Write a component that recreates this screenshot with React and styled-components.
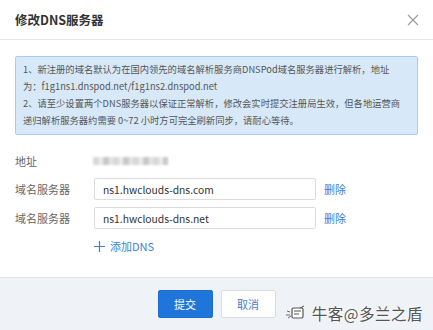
import React, { useState } from 'react';
import styled, { createGlobalStyle } from 'styled-components';

const GlobalStyle = createGlobalStyle`
  html, body {
    margin: 0;
    padding: 0;
    background: #fff;
  }
  body {
    font-family: "Noto Sans CJK SC", "Noto Sans", sans-serif;
    color: #333;
  }
`;

const Dialog = styled.div`
  position: relative;
  width: 433px;
  height: 330px;
  background: #fff;
  display: flex;
  flex-direction: column;
  overflow: hidden;
`;

const Header = styled.div`
  height: 39px;
  border-bottom: 1px solid #e6e6e6;
  display: flex;
  align-items: center;
  justify-content: space-between;
  padding: 0 14px 0 15px;
`;

const Title = styled.h2`
  margin: 0;
  font-size: 12.5px;
  font-weight: 700;
  color: #333;
`;

const CloseButton = styled.button`
  border: none;
  background: none;
  padding: 0;
  width: 12px;
  height: 12px;
  display: flex;
  cursor: pointer;
`;

const Body = styled.div`
  height: 237px;
  box-sizing: border-box;
  padding: 16px 15px 0;
`;

const Notice = styled.div`
  background: #d7e9f8;
  border: 1px solid #a9cbee;
  border-radius: 2px;
  padding: 4px 7px 5px;
  font-size: 9.3px;
  line-height: 17px;
  color: #555;
  white-space: nowrap;
`;

const Form = styled.div`
  margin-top: 16px;
  display: flex;
  flex-direction: column;
  gap: 7px;
`;

const Row = styled.div`
  display: flex;
  align-items: center;
  height: ${(p) => p.h || 22}px;
`;

const Label = styled.span`
  width: 79px;
  flex: none;
  font-size: 11px;
  color: #666;
`;

const Blurred = styled.div`
  width: 75px;
  height: 8px;
  margin-left: -1px;
  background: repeating-linear-gradient(90deg, #d8d8d8 0 6px, #ececec 6px 10px, #c9c9c9 10px 16px, #e4e4e4 16px 20px);
  filter: blur(1px);
`;

const Input = styled.input`
  width: 222px;
  height: 22px;
  box-sizing: border-box;
  border: 1px solid #dcdcdc;
  border-radius: 2px;
  padding: 0 8px;
  font-family: inherit;
  font-size: 10.3px;
  color: #333;
  outline: none;
  margin-right: 8px;
`;

const LinkButton = styled.button`
  border: none;
  background: none;
  padding: 0;
  font-family: inherit;
  font-size: 11px;
  color: #3c7fd6;
  cursor: pointer;
  display: flex;
  align-items: center;
  gap: 5px;
`;

const AddRow = styled(Row)`
  padding-left: 79px;
  margin-top: 1px;
`;

const Footer = styled.div`
  flex: 1;
  border-top: 1px solid #e3e3e3;
  background: #eff3f7;
  display: flex;
  justify-content: center;
  align-items: flex-start;
  padding-top: 12px;
  gap: 8px;
`;

const Button = styled.button`
  width: 55px;
  height: 28px;
  border-radius: 2px;
  font-family: inherit;
  font-size: 11px;
  cursor: pointer;
  border: 1px solid ${(p) => (p.primary ? '#1b6fd2' : '#dcdcdc')};
  background: ${(p) => (p.primary ? '#1f75d9' : '#fff')};
  color: ${(p) => (p.primary ? '#fff' : '#3c7fd6')};
`;

const Watermark = styled.div`
  position: absolute;
  right: 10px;
  bottom: 6px;
  display: flex;
  align-items: center;
  gap: 4px;
  font-size: 15.5px;
  color: #555;
  text-shadow: 0 0 2px #fff, 0 0 2px #fff;
  letter-spacing: 0.5px;
`;

const initial = ['ns1.hwclouds-dns.com', 'ns1.hwclouds-dns.net'];

export default function App() {
  const [servers, setServers] = useState(initial);

  const update = (i, v) => setServers((s) => s.map((x, j) => (j === i ? v : x)));
  const remove = (i) => setServers((s) => s.filter((_, j) => j !== i));

  return (
    <Dialog>
      <GlobalStyle />
      <Header>
        <Title>修改DNS服务器</Title>
        <CloseButton aria-label="关闭">
          <svg width="12" height="12" viewBox="0 0 12 12">
            <path d="M1 1L11 11M11 1L1 11" stroke="#9a9a9a" strokeWidth="1.1" fill="none" />
          </svg>
        </CloseButton>
      </Header>
      <Body>
        <Notice>
          1、新注册的域名默认为在国内领先的域名解析服务商DNSPod域名服务器进行解析，地址
          <br />
          为：f1g1ns1.dnspod.net/f1g1ns2.dnspod.net
          <br />
          2、请至少设置两个DNS服务器以保证正常解析，修改会实时提交注册局生效，但各地运营商
          <br />
          递归解析服务器约需要 0~72 小时方可完全刷新同步，请耐心等待。
        </Notice>
        <Form>
          <Row h={20}>
            <Label>地址</Label>
            <Blurred />
          </Row>
          {servers.map((s, i) => (
            <Row key={i}>
              <Label>域名服务器</Label>
              <Input value={s} onChange={(e) => update(i, e.target.value)} />
              <LinkButton onClick={() => remove(i)}>删除</LinkButton>
            </Row>
          ))}
          <AddRow h={18}>
            <LinkButton onClick={() => setServers((s) => [...s, ''])}>
              <svg width="11" height="11" viewBox="0 0 11 11">
                <path d="M5.5 0V11M0 5.5H11" stroke="#3c7fd6" strokeWidth="1.2" fill="none" />
              </svg>
              添加DNS
            </LinkButton>
          </AddRow>
        </Form>
      </Body>
      <Footer>
        <Button primary>提交</Button>
        <Button>取消</Button>
      </Footer>
      <Watermark>
        <svg width="24" height="16" viewBox="0 0 24 16">
          <path d="M3 6l3 1M2 10l4 0M4 13l3-2" stroke="#666" strokeWidth="1" fill="none" />
          <rect x="8" y="3" width="11" height="10" rx="1.5" stroke="#555" strokeWidth="1.2" fill="#fff" />
          <path d="M10 6h7M10 9h5M16 3l4-2" stroke="#555" strokeWidth="1" fill="none" />
        </svg>
        牛客@多兰之盾
      </Watermark>
    </Dialog>
  );
}
